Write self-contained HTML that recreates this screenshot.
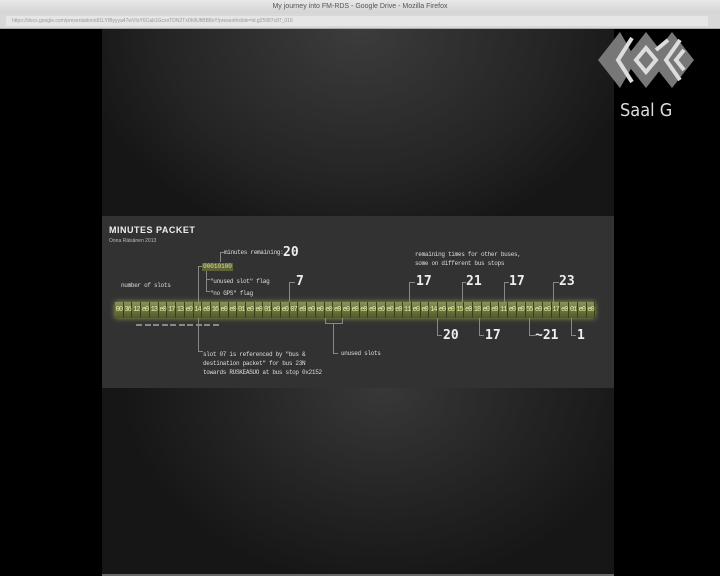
<!DOCTYPE html>
<html><head><meta charset="utf-8"><style>
*{margin:0;padding:0;box-sizing:border-box}
body{width:720px;height:576px;background:#000;position:relative;overflow:hidden;font-family:"Liberation Sans",sans-serif}
#tb{position:absolute;left:0;top:0;width:720px;height:13px;background:linear-gradient(#e8e8e8,#d4d4d4);font-size:7px;color:#555;text-align:center;line-height:13px}
#ub{position:absolute;left:0;top:13px;width:720px;height:16px;background:#d8d8d8;border-bottom:1px solid #aaa}
#ub div{position:absolute;left:6px;top:3px;width:702px;height:10px;background:#e6e6e6;font-size:5px;color:#999;line-height:10px;padding-left:6px}
#slide{position:absolute;left:102px;top:29px;width:512px;height:546px;background:radial-gradient(ellipse 280px 220px at 256px 0px,#3c3c3c,#242424 70%,#161616);overflow:hidden}
#slide2{position:absolute;left:0;top:359px;width:512px;height:187px;background:radial-gradient(ellipse 260px 200px at 280px 0px,#383838,#232323 60%,#161616)}
#panel{position:absolute;left:0;top:187px;width:512px;height:172px;background:#323232}
.t{position:absolute;color:#ddd;font-family:"Liberation Mono",monospace;font-size:6px;white-space:nowrap;letter-spacing:-0.3px}
.big{position:absolute;color:#eee;font-family:"DejaVu Sans Mono",monospace;font-weight:bold;font-size:13px}
.ln{position:absolute;border-color:#888;border-style:solid;border-width:0}
#row{position:absolute;left:13px;top:86px;height:16px;width:480px;display:flex;background:#6a7040;box-shadow:0 0 6px #9aa050}
#row span{flex:1;font-family:"Liberation Mono",monospace;font-size:7px;color:#e8f0a0;text-align:center;line-height:16px;background:linear-gradient(#8a9060,#505a28);border-right:1px solid #3a4018;letter-spacing:-1px}
#logo{position:absolute;left:598px;top:30px}
.d{position:absolute;top:108px;width:6px;height:2px;background:#888}
</style></head><body>
<div id="tb">My journey into FM-RDS - Google Drive - Mozilla Firefox</div>
<div id="ub"><div>https://docs.google.com/presentation/d/1LYIByyya47wVIoY6Cab1GcxoTDN2Tx0h9UfiBB8xY/present#slide=id.g25987c87_016</div></div>
<div id="slide">
<div id="slide2"></div>
<div id="panel">
<div style="position:absolute;left:7px;top:9px;color:#eee;font-weight:bold;font-size:9px;letter-spacing:.5px">MINUTES PACKET</div>
<div style="position:absolute;left:7px;top:22px;color:#bbb;font-size:5px">Oona Räisänen 2013</div>
<div class="t" style="left:122px;top:33px">minutes remaining:</div>
<div class="big" style="left:181px;top:29px">20</div>
<div class="ln" style="left:118px;top:36px;width:4px;height:10px;border-left-width:1px;border-top-width:1px"></div>
<div style="position:absolute;left:100px;top:47px;width:31px;height:8px;background:#5f6436;color:#dde090;font-family:'Liberation Mono',monospace;font-size:6px;line-height:8px;text-align:center">00010100</div>
<div class="t" style="left:108px;top:62px">"unused slot" flag</div>
<div class="t" style="left:108px;top:74px">"no GPS" flag</div>
<div class="ln" style="left:104px;top:55px;width:4px;height:9px;border-left-width:1px;border-bottom-width:1px"></div>
<div class="ln" style="left:104px;top:55px;width:4px;height:21px;border-left-width:1px;border-bottom-width:1px"></div>
<div class="t" style="left:19px;top:66px">number of slots</div>
<div class="ln" style="left:96px;top:50px;width:4px;height:86px;border-left-width:1px;border-top-width:1px"></div>
<div class="ln" style="left:96px;top:135px;width:5px;border-top-width:1px"></div>
<div class="big" style="left:194px;top:58px">7</div>
<div class="ln" style="left:187px;top:66px;width:6px;height:20px;border-left-width:1px;border-top-width:1px"></div>
<div class="t" style="left:313px;top:34px;line-height:9px">remaining times for other buses,<br>some on different bus stops</div>
<div class="big" style="left:314px;top:58px">17</div><div class="ln" style="left:307px;top:66px;width:6px;height:20px;border-left-width:1px;border-top-width:1px"></div>
<div class="big" style="left:364px;top:58px">21</div><div class="ln" style="left:360px;top:66px;width:4px;height:20px;border-left-width:1px;border-top-width:1px"></div>
<div class="big" style="left:407px;top:58px">17</div><div class="ln" style="left:402px;top:66px;width:5px;height:20px;border-left-width:1px;border-top-width:1px"></div>
<div class="big" style="left:457px;top:58px">23</div><div class="ln" style="left:451px;top:66px;width:6px;height:20px;border-left-width:1px;border-top-width:1px"></div>
<div id="row"></div>
<div id="dashes"></div>
<div class="ln" style="left:223px;top:102px;width:18px;height:6px;border-left-width:1px;border-right-width:1px;border-bottom-width:1px"></div>
<div class="ln" style="left:231px;top:108px;width:5px;height:30px;border-left-width:1px;border-bottom-width:1px"></div>
<div class="t" style="left:239px;top:134px">unused slots</div>
<div class="t" style="left:101px;top:134px;line-height:9px">slot 07 is referenced by "bus &amp;<br>destination packet" for bus 23N<br>towards RUSKEASUO at bus stop 0x2152</div>
<div class="ln" style="left:335px;top:102px;width:5px;height:18px;border-left-width:1px;border-bottom-width:1px"></div><div class="big" style="left:341px;top:112px">20</div>
<div class="ln" style="left:377px;top:102px;width:5px;height:18px;border-left-width:1px;border-bottom-width:1px"></div><div class="big" style="left:383px;top:112px">17</div>
<div class="ln" style="left:427px;top:102px;width:6px;height:18px;border-left-width:1px;border-bottom-width:1px"></div><div class="big" style="left:433px;top:112px">~21</div>
<div class="ln" style="left:469px;top:102px;width:5px;height:18px;border-left-width:1px;border-bottom-width:1px"></div><div class="big" style="left:475px;top:112px">1</div>
</div>
</div>
<svg id="logo" width="100" height="62" viewBox="0 0 100 62">
<g fill="#777"><polygon points="0,30 22,2 38,30 22,58"/><polygon points="26,30 48,2 70,30 48,58"/><polygon points="52,30 74,2 96,30 74,58"/></g>
<g fill="none" stroke="#ddd" stroke-width="4"><polyline points="34,8 20,30 34,52"/><polygon points="48,18 58,30 48,42 38,30"/><polyline points="70,10 58,20"/><polyline points="82,10 68,30 82,50"/><polyline points="86,20 78,30 86,40"/></g>
</svg>
<div style="position:absolute;left:620px;top:100px;color:#ddd;font-size:18px;font-family:'DejaVu Sans Condensed','Liberation Sans Narrow',sans-serif">Saal G</div>
<div style="position:absolute;left:102px;top:574px;width:512px;height:2px;background:#666"></div>
<script>
var b="00 36 12 e0 13 e0 17 13 e0 14 e0 16 e0 e0 01 e0 e0 01 e0 e0 07 e0 e0 e0 e0 e0 e0 e0 e0 e0 e0 e0 e0 11 e0 e0 14 e0 e0 15 e0 18 e0 e0 11 e0 e0 55 e0 e0 17 e0 01 e0 e0".split(" ");
var r=document.getElementById("row");b.forEach(function(x){var s=document.createElement("span");s.textContent=x;r.appendChild(s);});
var d=document.getElementById("dashes");for(var i=0;i<10;i++){var e=document.createElement("div");e.className="d";e.style.left=(34+i*8.5)+"px";d.appendChild(e);}
</script>
</body></html>
